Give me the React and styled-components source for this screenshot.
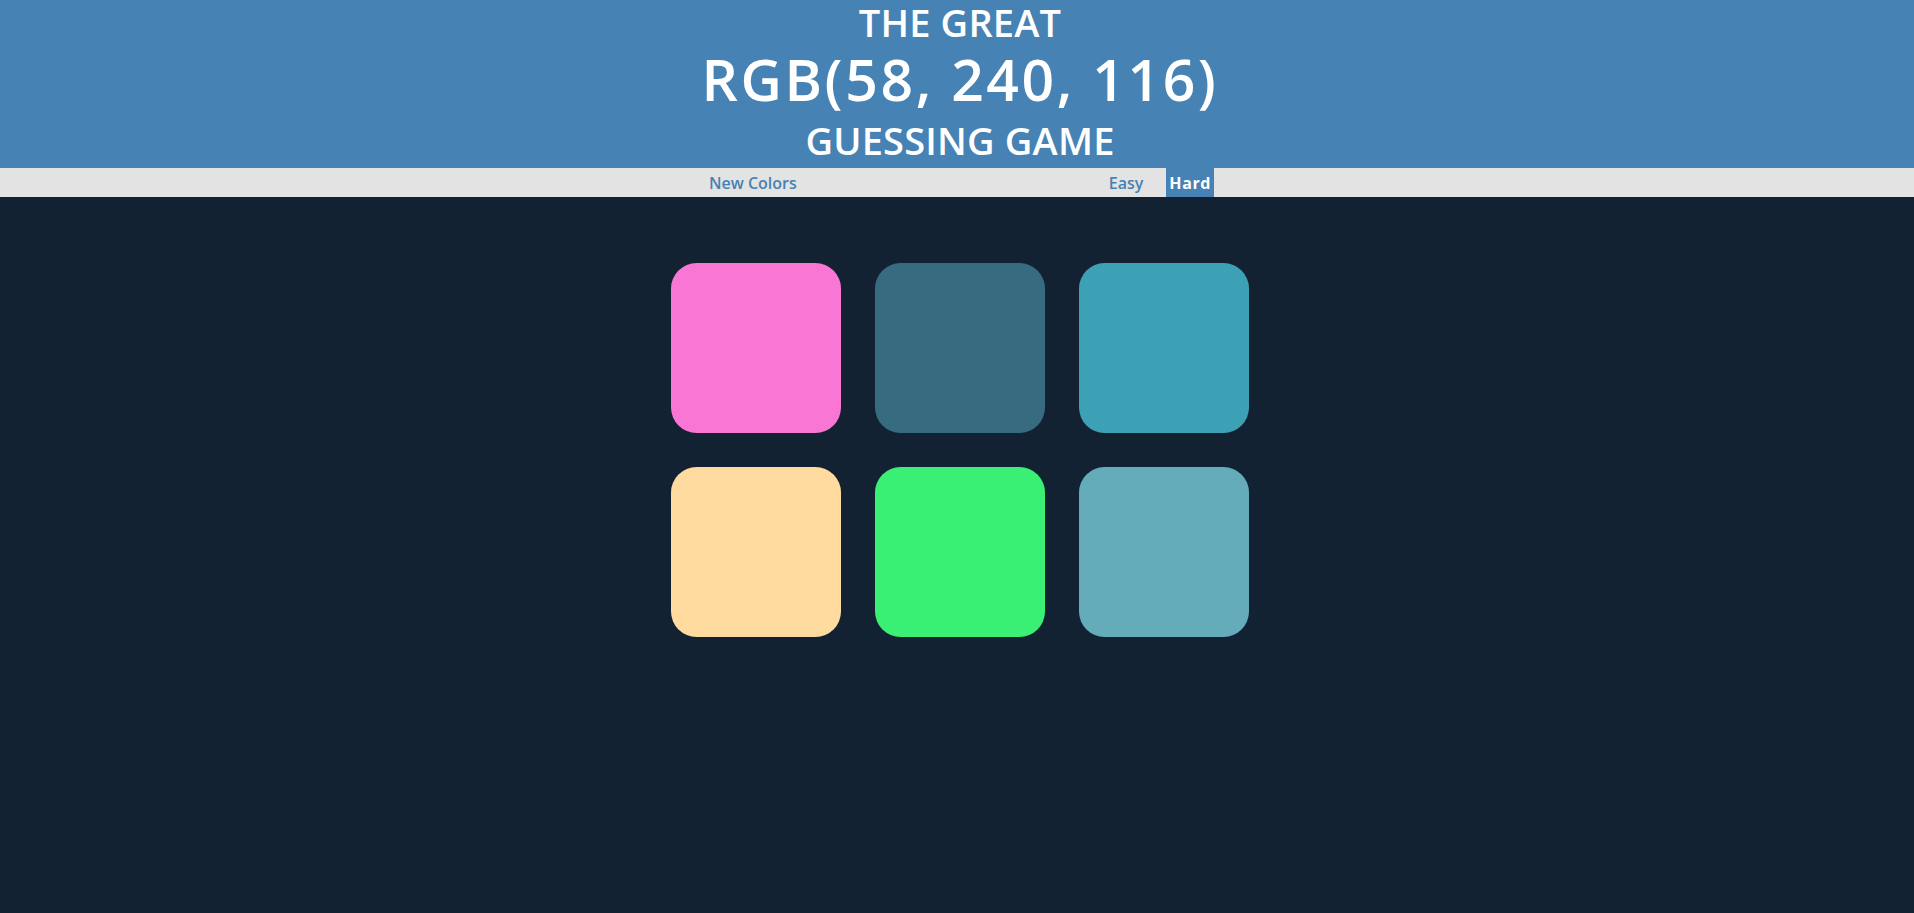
import React, { useState } from 'react';
import styled, { createGlobalStyle } from 'styled-components';

const GlobalStyle = createGlobalStyle`
    html, body {
        margin: 0;
        padding: 0;
        background-color: #122233;
        font-family: "Open Sans", "Noto Sans", sans-serif;
    }
`;

// the reference page is centred 3px right of the window centre,
// so every centred block gets a 6px left padding
const Header = styled.h1`
    margin: 0;
    padding-left: 6px;
    height: 168px;
    background-color: #4682b4;
    color: white;
    text-align: center;
    text-transform: uppercase;
    font-weight: 600;
    display: flex;
    flex-direction: column;
    align-items: center;
`;

const Line = styled.span`
    display: block;
    font-size: ${props => props.big ? '57px' : '38px'};
    letter-spacing: ${props => props.big ? '2.6px' : '0.2px'};
    line-height: ${props => props.lh};
`;

const Stripe = styled.div`
    height: 29px;
    padding-left: 6px;
    background-color: #e3e3e3;
    display: flex;
    justify-content: center;
    align-items: stretch;
`;

const NavButton = styled.button`
    border: none;
    outline: 0;
    background: ${props => props.selected ? '#4682b4' : 'none'};
    color: ${props => props.selected ? 'white' : '#4682b4'};
    font-family: "Open Sans", "Noto Sans", sans-serif;
    font-size: 16px;
    font-weight: ${props => props.selected ? 700 : 600};
    letter-spacing: ${props => props.selected ? '0.6px' : '0'};
    padding: 0 3px;
    margin: 0;
    margin-left: ${props => props.gap || '0px'};
    cursor: pointer;
`;

const Message = styled.span`
    width: 306px;
`;

const Board = styled.div`
    padding-top: 66px;
    padding-left: 6px;
    display: grid;
    grid-template-columns: repeat(3, 170px);
    gap: 34px;
    justify-content: center;
`;

const Square = styled.div`
    width: 170px;
    height: 170px;
    border-radius: 15%;
    background-color: ${props => props.color};
`;

const colors = [
    'rgb(250, 118, 213)',
    'rgb(55, 107, 128)',
    'rgb(60, 161, 180)',
    'rgb(255, 219, 160)',
    'rgb(58, 240, 116)',
    'rgb(100, 172, 186)',
];

export default function App() {
    const [mode, setMode] = useState('hard');
    return (
        <>
            <GlobalStyle />
            <Header>
                <Line lh="45px">The Great</Line>
                <Line big lh="68px">RGB(58, 240, 116)</Line>
                <Line lh="55px">Guessing Game</Line>
            </Header>
            <Stripe>
                <NavButton>New Colors</NavButton>
                <Message></Message>
                <NavButton selected={mode === 'easy'} onClick={() => setMode('easy')}>Easy</NavButton>
                <NavButton gap="20px" selected={mode === 'hard'} onClick={() => setMode('hard')}>Hard</NavButton>
            </Stripe>
            <Board>
                {colors.map((c, i) => <Square key={i} color={c} />)}
            </Board>
        </>
    );
}
